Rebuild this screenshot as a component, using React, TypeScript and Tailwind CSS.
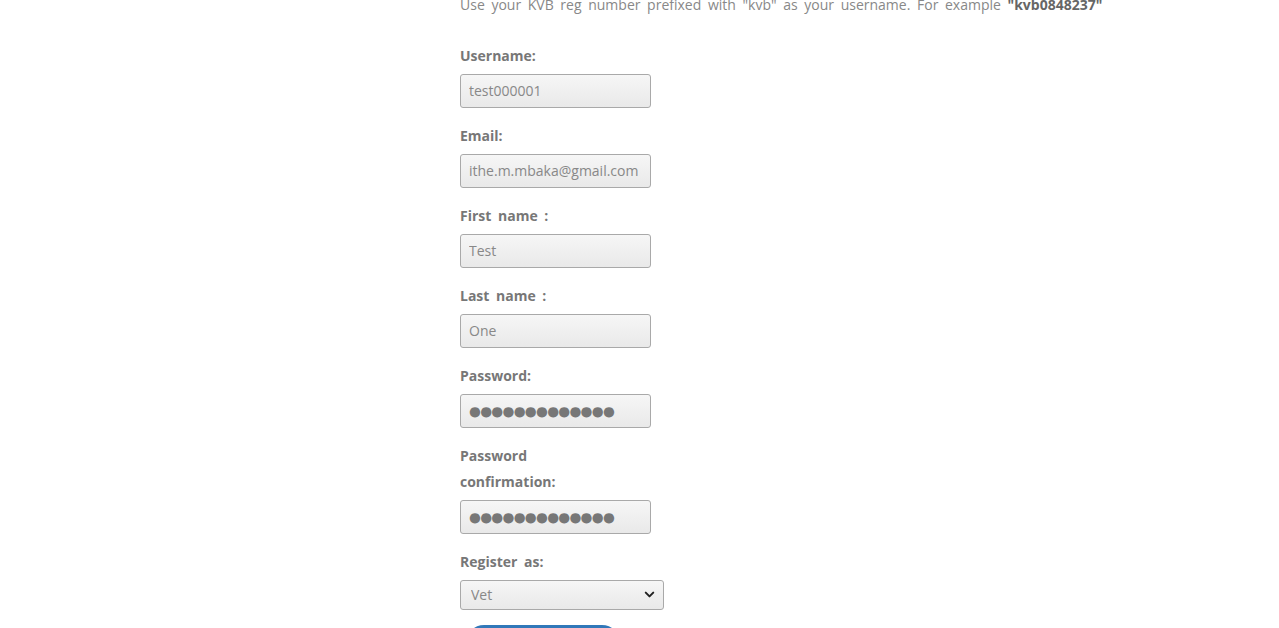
import { ChevronDown } from 'lucide-react'

const fields = [
  { label: 'Username:', value: 'test000001', secret: false },
  { label: 'Email:', value: 'ithe.m.mbaka@gmail.com', secret: false },
  { label: 'First name :', value: 'Test', secret: false },
  { label: 'Last name :', value: 'One', secret: false },
  { label: 'Password:', value: '●●●●●●●●●●●●●', secret: true },
]

function Field({ label, value, secret }: { label: React.ReactNode; value: string; secret: boolean }) {
  return (
    <div className="mb-[14px]">
      <label className="block w-[150px] pt-[1px] text-sm font-bold leading-[26px] text-[#777] mb-[5px]">
        {label}
      </label>
      <input
        readOnly
        type="text"
        value={value}
        className={
          secret
            ? "block w-[191px] h-[34px] px-2 pb-[1px] text-[13.6px] tracking-[-0.7px] [word-spacing:0] font-['DejaVu_Sans',sans-serif] text-[#777] border border-[#a9a9a9] rounded-[3px] bg-gradient-to-b from-[#f6f6f6] to-[#e9e9e9] outline-none"
            : 'block w-[191px] h-[34px] px-2 pb-[1px] text-sm text-[#888] border border-[#a9a9a9] rounded-[3px] bg-gradient-to-b from-[#f6f6f6] to-[#e9e9e9] outline-none'
        }
      />
    </div>
  )
}

export default function App() {
  return (
    <div className="min-h-screen bg-white font-['Open_Sans',sans-serif] [word-spacing:3px] overflow-hidden">
      <div className="pl-[460px]">
        <p className="-mt-[8px] mb-[24px] text-sm leading-[26px] text-[#888] whitespace-nowrap">
          Use your KVB reg number prefixed with &quot;kvb&quot; as your username. For example{' '}
          <b className="text-[#666]">&quot;kvb0848237&quot;</b>
        </p>

        {fields.map((f) => (
          <Field key={f.label} {...f} />
        ))}
        <Field
          label={
            <>
              Password
              <br />
              confirmation:
            </>
          }
          value="●●●●●●●●●●●●●"
          secret
        />

        {/* Role */}
        <div className="mb-[15px]">
          <label className="block pt-[1px] text-sm font-bold leading-[26px] text-[#777] mb-[5px]">Register as:</label>
          <div className="relative w-[204px]">
            <select
              defaultValue="vet"
              className="block w-full h-[30px] pl-[10px] appearance-none text-sm text-[#888] border border-[#a9a9a9] rounded-[3px] bg-gradient-to-b from-[#f6f6f6] to-[#e9e9e9] outline-none"
            >
              <option value="vet">Vet</option>
              <option value="farmer">Farmer</option>
            </select>
            <ChevronDown
              size={15}
              strokeWidth={3.2}
              className="absolute right-[7px] top-[7px] text-[#222] pointer-events-none"
            />
          </div>
        </div>

        <button className="ml-[6px] w-[154px] h-[36px] rounded-[18px] bg-[#3178b9] text-white text-sm">
          Register
        </button>
      </div>
    </div>
  )
}
